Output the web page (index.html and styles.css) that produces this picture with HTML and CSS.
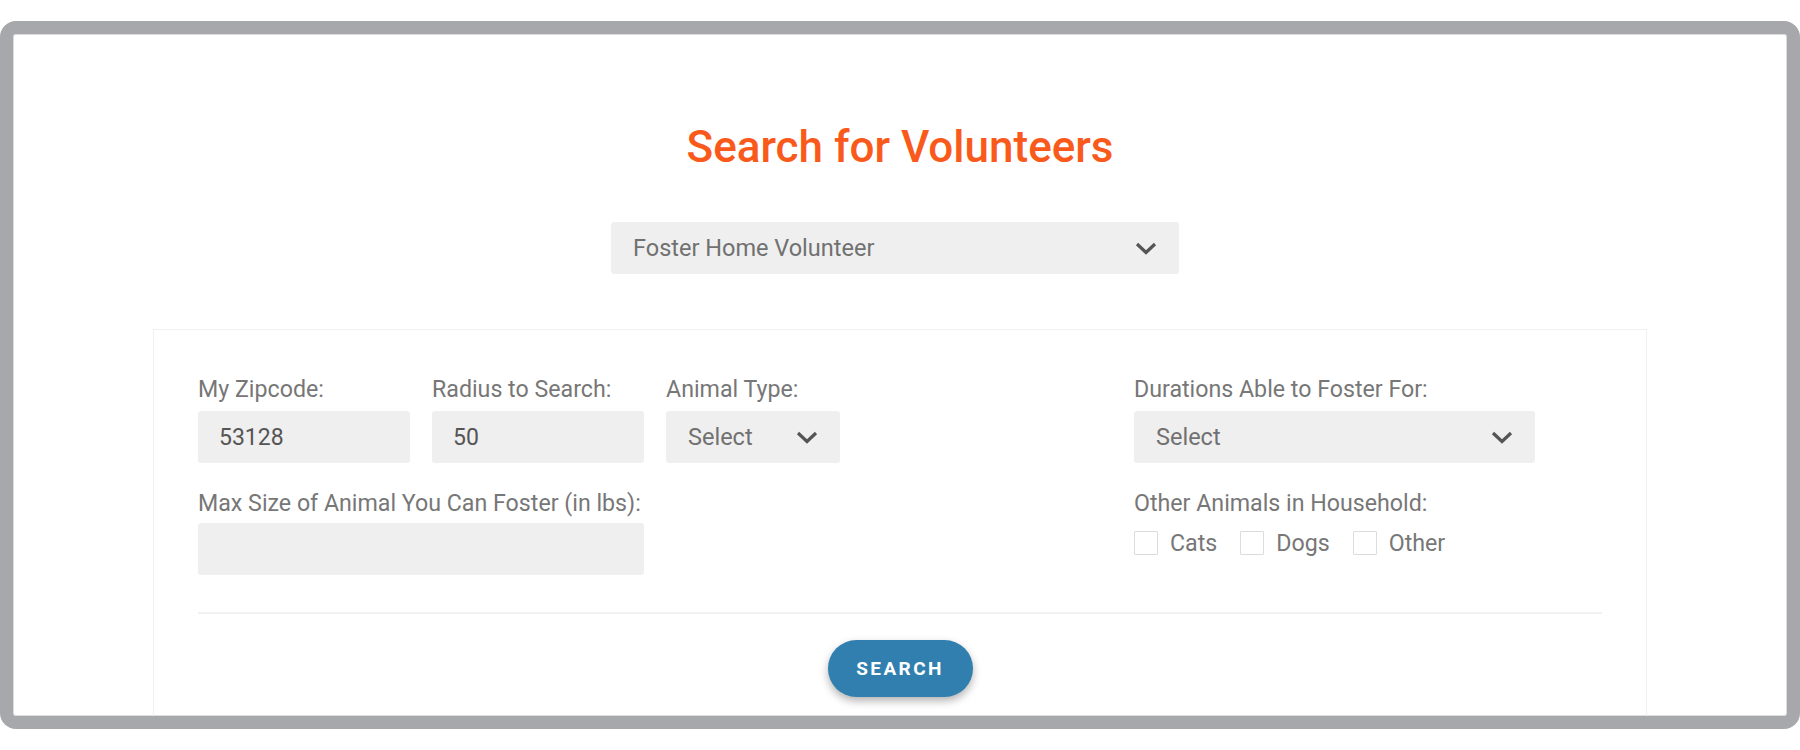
FILE: index.html
```html
<html>
  <head>
    <meta charset="utf-8" />
    <link rel="stylesheet" href="styles.css">
  </head>
  <body>
    <div class="frame">
      <h1 class="title">Search for Volunteers</h1>

      <div class="select top-select">
        <span>Foster Home Volunteer</span>
        <svg class="chevron" width="22" height="13" viewBox="0 0 22 13">
          <polyline points="2,2 11,10.5 20,2" />
        </svg>
      </div>

      <div class="card">
        <div class="fields">
          <div class="field">
            <p class="label">My Zipcode:</p>
            <input class="input" type="text" value="53128" />
          </div>
          <div class="field">
            <p class="label">Radius to Search:</p>
            <input class="input" type="text" value="50" />
          </div>
          <div class="field">
            <p class="label">Animal Type:</p>
            <div class="select small-select">
              <span>Select</span>
              <svg class="chevron" width="22" height="13" viewBox="0 0 22 13">
                <polyline points="2,2 11,10.5 20,2" />
              </svg>
            </div>
          </div>
          <div class="field durations">
            <p class="label">Durations Able to Foster For:</p>
            <div class="select wide-select">
              <span>Select</span>
              <svg class="chevron" width="22" height="13" viewBox="0 0 22 13">
                <polyline points="2,2 11,10.5 20,2" />
              </svg>
            </div>
          </div>

          <div class="field max-size">
            <p class="label">Max Size of Animal You Can Foster (in lbs):</p>
            <input class="input" type="text" value="" />
          </div>
          <div class="field others">
            <p class="label">Other Animals in Household:</p>
            <div class="checks">
              <label class="check"><span class="box"></span>Cats</label>
              <label class="check"><span class="box"></span>Dogs</label>
              <label class="check"><span class="box"></span>Other</label>
            </div>
          </div>
        </div>

        <div class="divider"></div>

        <div class="actions">
          <button class="search-button">SEARCH</button>
        </div>
      </div>
    </div>
  </body>
</html>
```

FILE: styles.css
```css
body {
  margin: 0;
  background: #fff;
  font-family: Roboto, "Liberation Sans", sans-serif;
}

.frame {
  margin-top: 21px;
  height: 708px;
  box-sizing: border-box;
  border: 13px solid #a7a8ab;
  border-radius: 16px;
  overflow: hidden;
  background: #fff;
  box-shadow: inset 0 0 0 1px #dcdcdc;
}

.title {
  margin: 86px 0 0;
  text-align: center;
  font-size: 44px;
  font-weight: 500;
  line-height: 54px;
  color: #f95a1b;
}

.select {
  display: flex;
  align-items: center;
  justify-content: space-between;
  box-sizing: border-box;
  height: 52px;
  padding: 0 22px;
  background: #efefef;
  border-radius: 3px;
  font-size: 23.5px;
  color: #717171;
}

.chevron polyline {
  fill: none;
  stroke: #555;
  stroke-width: 3.2;
}

.top-select {
  width: 568px;
  margin: 48px 0 0 calc(50% - 289px);
}

.card {
  width: 1494px;
  box-sizing: border-box;
  margin: 55px auto 0;
  border: 1px solid #f0f0f0;
  padding: 44px 44px 40px;
}

.fields {
  display: grid;
  grid-template-columns: 212px 212px 212px 212px 1fr;
  column-gap: 22px;
  row-gap: 25px;
}

.label {
  margin: 0 0 7px;
  font-size: 23.2px;
  line-height: 30px;
  color: #777;
  white-space: nowrap;
}

.input {
  display: block;
  box-sizing: border-box;
  width: 100%;
  height: 52px;
  padding: 0 21px;
  border: 0;
  border-radius: 3px;
  background: #efefef;
  font-family: Roboto, "Liberation Sans", sans-serif;
  font-size: 23px;
  color: #555;
  outline: 0;
}

.small-select {
  width: 174px;
}

.durations {
  grid-column: 5;
}

.wide-select {
  width: 401px;
}

.max-size {
  grid-column: 1 / span 2;
}

.max-size .label {
  margin-bottom: 5px;
}

.others {
  grid-column: 5;
}

.others .label {
  margin-bottom: 13px;
}

.checks {
  display: flex;
  gap: 23px;
}

.check {
  display: flex;
  align-items: center;
  gap: 12px;
  font-size: 23.2px;
  line-height: 24px;
  color: #777;
}

.box {
  width: 24px;
  height: 24px;
  box-sizing: border-box;
  border: 1px solid #dcdcdc;
  border-radius: 1px;
  background: #fff;
}

.divider {
  margin-top: 37px;
  height: 2px;
  background: #f2f2f2;
}

.actions {
  display: flex;
  justify-content: center;
  padding-top: 26px;
}

.search-button {
  width: 145px;
  height: 57px;
  border: 0;
  border-radius: 29px;
  background: #307fae;
  color: #fff;
  font-family: Roboto, "Liberation Sans", sans-serif;
  font-size: 19px;
  font-weight: 700;
  letter-spacing: 2.4px;
  box-shadow: 0 4px 8px rgba(0, 0, 0, 0.3);
  outline: 0;
}
```
